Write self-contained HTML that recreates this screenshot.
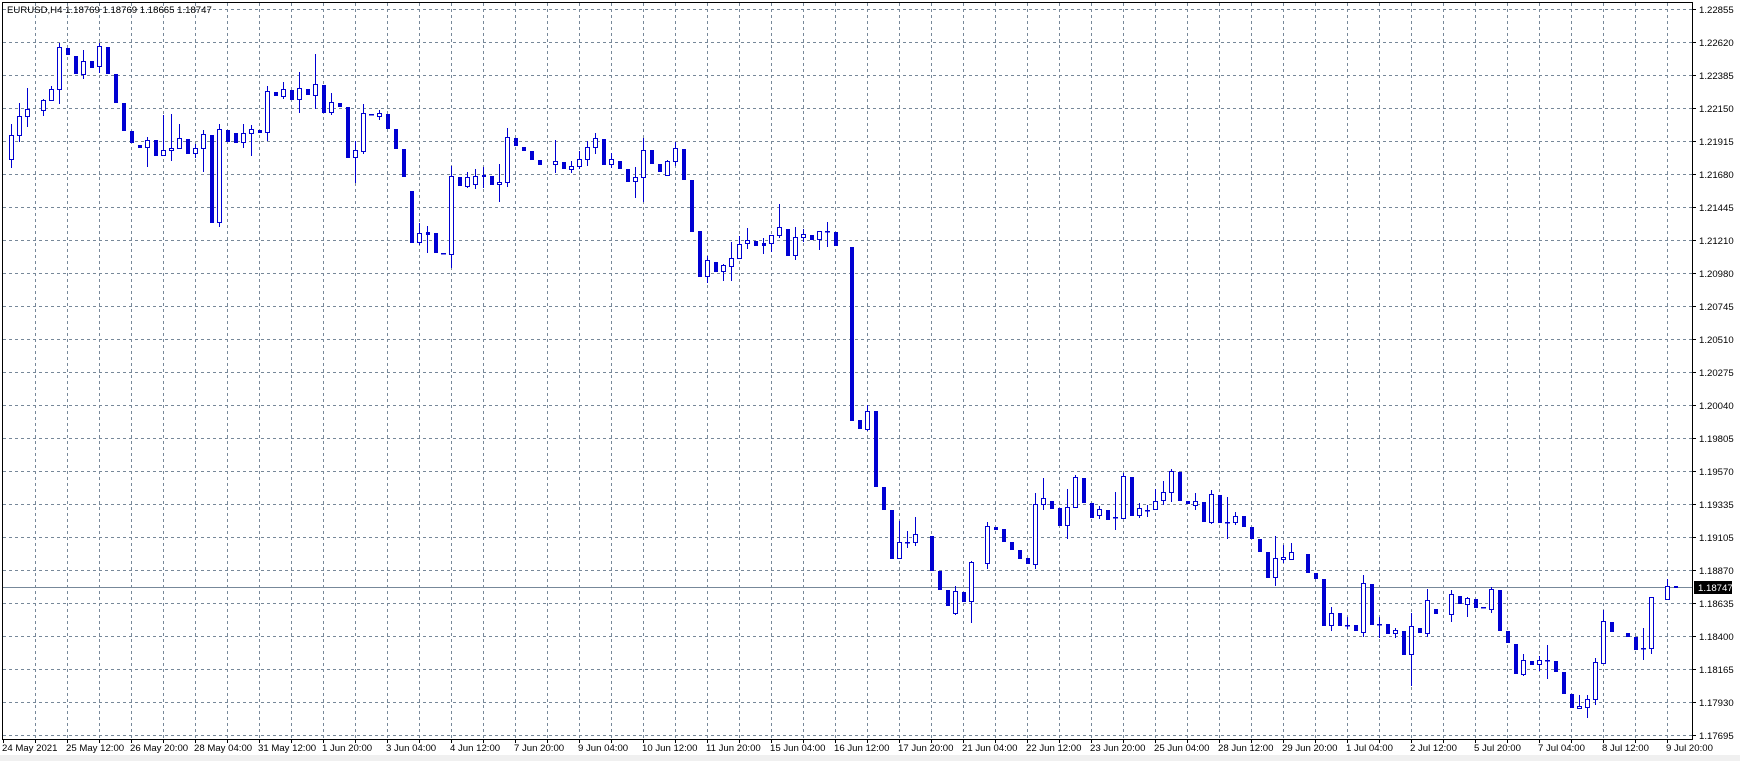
<!DOCTYPE html>
<html><head><meta charset="utf-8">
<style>
html,body{margin:0;padding:0;background:#fff;}
body{width:1740px;height:761px;overflow:hidden;position:relative;font-family:"Liberation Sans",Arial,sans-serif;}
svg{position:absolute;left:0;top:0;}
text{font-family:"Liberation Sans",Arial,sans-serif;font-size:9.6px;fill:#000;}
</style></head><body>
<svg id="s" width="1740" height="761" xmlns="http://www.w3.org/2000/svg" shape-rendering="crispEdges">
<rect x="0" y="755" width="1740" height="6" fill="#f0f0f0"/>
<g id="grid" stroke="#778899" stroke-width="1" stroke-dasharray="3,3"></g>
<line x1="2.5" y1="2.5" x2="1692.5" y2="2.5" stroke="#000"/>
<line x1="2.5" y1="2" x2="2.5" y2="740" stroke="#000"/>
<line x1="1692.5" y1="2" x2="1692.5" y2="740" stroke="#000"/>
<line x1="2" y1="739.5" x2="1693" y2="739.5" stroke="#000"/>
<line x1="3" y1="587.5" x2="1692" y2="587.5" stroke="#778899"/>
<g id="candles"></g>
<g id="axis"></g>
<text x="7" y="13">EURUSD,H4  1.18769 1.18769 1.18665 1.18747</text>
<rect x="1694" y="581" width="38" height="13" fill="#000"/>
<text x="1698" y="591" style="fill:#fff">1.18747</text>
</svg>
<script>
var NS="http://www.w3.org/2000/svg";
function el(t,a,p){var e=document.createElementNS(NS,t);for(var k in a)e.setAttribute(k,a[k]);p.appendChild(e);return e;}
var g=document.getElementById('grid'),ax=document.getElementById('axis'),cg=document.getElementById('candles');
for(var k=0;k<=22;k++){var y=9.5+33*k;el('line',{x1:3,y1:y,x2:1692,y2:y},g);}
for(var k=1;k<=52;k++){var x=3.5+32*k;el('line',{x1:x,y1:3,x2:x,y2:739},g);}
var prices=["1.22855","1.22620","1.22385","1.22150","1.21915","1.21680","1.21445","1.21210","1.20980","1.20745","1.20510","1.20275","1.20040","1.19805","1.19570","1.19335","1.19105","1.18870","1.18635","1.18400","1.18165","1.17930","1.17695"];
for(var k=0;k<prices.length;k++){var y=9.5+33*k;el('line',{x1:1692,y1:y,x2:1696,y2:y,stroke:'#000'},ax);var t=el('text',{x:1699,y:y+3.5},ax);t.textContent=prices[k];}
var times=["24 May 2021","25 May 12:00","26 May 20:00","28 May 04:00","31 May 12:00","1 Jun 20:00","3 Jun 04:00","4 Jun 12:00","7 Jun 20:00","9 Jun 04:00","10 Jun 12:00","11 Jun 20:00","15 Jun 04:00","16 Jun 12:00","17 Jun 20:00","21 Jun 04:00","22 Jun 12:00","23 Jun 20:00","25 Jun 04:00","28 Jun 12:00","29 Jun 20:00","1 Jul 04:00","2 Jul 12:00","5 Jul 20:00","7 Jul 04:00","8 Jul 12:00","9 Jul 20:00"];
for(var k=0;k<=52;k++){var x=3.5+32*k;el('line',{x1:x,y1:739,x2:x,y2:743,stroke:'#000'},ax);}
for(var k=0;k<times.length;k++){var x=3+64*k;var t=el('text',{x:(k==0?2:x-1),y:751},ax);t.textContent=times[k];}
// i,type,bodyTop,bodyBot,high,low
var D=[
[0,'u',135,159,124,167],[1,'u',116,135,103,141],[2,'u',109,116,88,126],[4,'u',100,110,99,115],[5,'u',89,100,86,100],[6,'u',47,89,43,103],[7,'d',48,54],[8,'d',56,73],[9,'u',61,74,50,78],[10,'d',61,67],[11,'u',46,66,43,72],[12,'d',47,73],[13,'d',74,102],[14,'d',103,130],[15,'d',131,142],[16,'d',145,147],[17,'u',140,147,137,166],[18,'d',140,155],[19,'u',150,155,115,155],[20,'u',148,150,114,160],[21,'u',138,148,124,148],[22,'d',139,153],[23,'u',148,153,144,157],[24,'u',134,148,130,171],[25,'d',135,222],[26,'u',129,222,124,226],[27,'d',130,141],[28,'d',133,142],[29,'u',133,142,124,147],[30,'u',129,133,125,155],[31,'d',130,132],[32,'u',91,132,86,140],[33,'d',92,95],[34,'u',89,96,82,98],[35,'d',90,99],
[36,'u',88,99,72,112],[37,'d',89,94],[38,'u',84,95,54,108],[39,'d',85,112],[40,'u',102,112,93,114],[41,'d',103,106],[42,'d',107,157],[43,'u',150,157,141,182],[44,'u',113,151,104,153],[45,'x',114,114,114,114],[46,'u',113,116,110,119],[47,'d',114,128],[48,'d',129,148],[49,'d',149,176],[50,'d',191,242],[51,'u',233,242,223,244],[52,'d',232,234,226,252],[53,'d',233,252],[54,'x',253,253,253,253],[55,'u',176,254,166,267],[56,'d',177,185],[57,'u',177,186,172,187],[58,'u',176,184,169,188],[59,'d',175,176,167,187],[60,'d',176,184],[61,'u',182,184,164,201],[62,'u',137,182,128,186],[63,'d',138,145],[64,'d',147,150],[65,'d',151,159],[66,'d',160,164],[68,'u',161,164,140,172],[69,'d',162,168],[70,'u',166,169,161,172],[71,'u',159,166,151,168],[72,'u',147,159,141,165],
[73,'u',138,147,133,153],[74,'d',139,164],[75,'u',159,164,153,167],[76,'d',161,168],[77,'d',169,181],[78,'u',177,181,167,197],[79,'u',150,177,138,201],[80,'d',150,163],[81,'d',164,171],[82,'u',161,175,160,175],[83,'u',148,161,142,165],[84,'d',149,179],[85,'d',180,231],[86,'d',231,276],[87,'u',260,276,256,282],[88,'d',262,271],[89,'u',265,271,264,280],[90,'u',258,266,242,280],[91,'u',244,258,236,258],[92,'u',240,243,228,248],[93,'d',241,245],[94,'d',243,245,238,253],[95,'u',235,243,235,251],[96,'u',227,235,204,237],[97,'d',229,255],[98,'u',237,255,227,259],[99,'u',234,237,229,241],[100,'d',235,239],[101,'u',231,239,231,249],[102,'x',231,231,222,246],[103,'d',232,245],
[105,'d',247,420],[106,'d',420,428],[107,'u',411,429,405,430],[108,'d',411,486],[109,'d',487,509],[110,'d',510,558],[111,'u',542,558,521,558],[112,'x',542,542,531,547],[113,'u',534,542,517,545],[115,'d',536,570],[116,'d',571,589],[117,'d',590,605],[118,'u',591,613,586,614],[119,'d',592,601],[120,'u',562,601,561,622],[122,'u',526,563,522,568],[123,'d',527,529],[124,'d',529,541],[125,'d',542,549],[126,'d',550,558],[127,'d',558,563],[128,'u',504,564,493,568],[129,'u',498,504,478,509],[130,'d',501,508],[131,'d',508,525],[132,'u',507,525,489,538],[133,'u',477,507,475,507],[134,'d',478,502],[135,'d',503,517],[136,'u',509,515,506,518],[137,'d',510,519],[138,'x',517,517,492,529],[139,'u',476,518,473,518],[140,'d',477,515],
[141,'u',508,515,503,517],[142,'x',510,510,505,516],[143,'u',501,509,489,509],[144,'u',492,500,481,504],[145,'u',471,492,469,501],[146,'d',472,500],[147,'d',501,503],[148,'u',501,505,493,509],[149,'d',502,521],[150,'u',494,522,490,523],[151,'d',495,522],[152,'x',522,522,497,538],[153,'u',516,522,512,524],[154,'d',516,526],[155,'d',527,538],[156,'d',539,551],[157,'d',552,577],[158,'u',558,577,536,585],[159,'u',557,559,545,562],[160,'u',552,559,543,559],[162,'d',554,572],[163,'d',573,578],[164,'d',579,625],[165,'u',613,625,607,630],[166,'d',613,625],[167,'x',625,625,617,628],[168,'d',625,630],[169,'u',583,632,575,636],[170,'d',584,624],[171,'x',624,624,617,637],[172,'d',624,633],[173,'u',630,633,628,637],[174,'d',631,654],[175,'u',626,654,613,685],[176,'d',628,632],[177,'u',600,633,589,636],[178,'d',609,613],
[180,'u',594,614,590,621],[181,'d',596,603],[182,'u',598,604,597,616],[183,'d',599,607],[184,'x',607,607,607,607],[185,'u',589,609,587,612],[186,'d',590,630],[187,'d',631,642],[188,'d',644,673],[189,'u',660,674,654,675],[190,'d',661,664],[191,'u',660,664,656,670],[192,'x',660,660,645,678],[193,'d',661,671],[194,'d',672,693],[195,'d',694,707],[196,'u',706,708,695,708],[197,'u',699,707,695,717],[198,'u',662,699,658,704],[199,'u',621,663,610,663],[200,'d',622,631],[202,'d',633,636],[203,'d',637,649],[204,'x',648,648,628,659],[205,'u',597,648,597,653],[207,'u',586,599,579,599],[208,'d',586,587]
];
var C='#0000d2';
D.forEach(function(d){
  var i=d[0],t=d[1],bt=d[2],bb=d[3],h=d.length>4?d[4]:bt,l=d.length>4?d[5]:bb;
  var cx=11+8*i;
  if(h<bt||l>bb) el('rect',{x:cx,y:h,width:1,height:Math.max(1,l-h+1),fill:C},cg);
  if(t=='d'){el('rect',{x:cx-1,y:bt,width:4,height:Math.max(2,bb-bt+1),fill:C},cg);}
  else if(t=='u'){
    var hh=Math.max(2,bb-bt);
    el('rect',{x:cx-1.5,y:bt+0.5,width:4,height:hh,fill:'#fff',stroke:C,'stroke-width':1,'shape-rendering':'auto'},cg);
  } else {el('rect',{x:cx-2,y:bt,width:5,height:1.5,fill:C},cg);}
});
</script>
</body></html>
